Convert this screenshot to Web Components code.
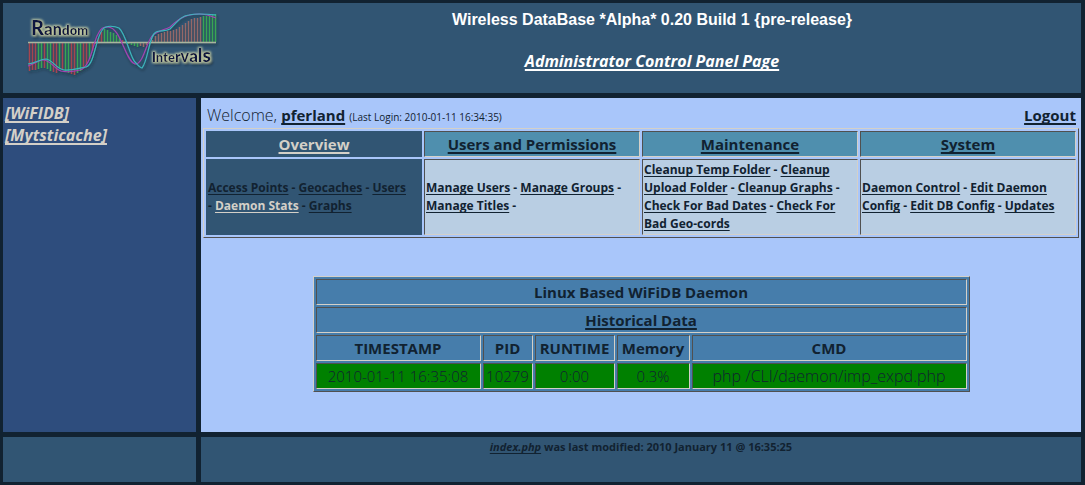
<!DOCTYPE html>
<html lang="en">
<head>
<meta charset="utf-8">
<title>Wireless DataBase - Administrator Control Panel</title>
<style>
  body { margin: 0; background: #112231; }
</style>
</head>
<body>
<wifi-app></wifi-app>

<template id="app-tpl">
  <style>
    :host {
      --ink: #112231; --panel: #315573; --light: #d4d0c8; --dark: #505050;
      display: grid; box-sizing: border-box; min-height: 100vh;
      grid-template-columns: 193px minmax(0, 1fr);
      grid-template-rows: auto 1fr auto;
      gap: 5px; padding: 3px 4px 3px 3px;
      background: var(--ink); color: var(--ink);
      font: 300 16px/22px "Open Sans", "Noto Sans", sans-serif;
      text-decoration-skip-ink: none;
    }
    site-header { grid-column: 1 / -1; }
    main { background: #a9c6fa; padding: 6px 2px 38px; }
    daemon-table { margin-top: 38px; }
    .foot { background: var(--panel); min-height: 45px; box-sizing: border-box; padding-top: 1px; }
    footer { text-align: center; font-weight: 700; font-size: 11px; line-height: 18px; }
    footer a { color: inherit; font-style: italic; text-decoration-thickness: 1px; text-underline-offset: 2px; }
  </style>
  <site-header></site-header>
  <side-nav>
    <a href="#wifidb">[WiFIDB]</a>
    <a href="#cache">[Mytsticache]</a>
  </side-nav>
  <main>
    <user-bar></user-bar>
    <admin-menu></admin-menu>
    <daemon-table></daemon-table>
  </main>
  <div class="foot"></div>
  <footer class="foot"><a href="index.php">index.php</a> was last modified: 2010 January 11 @ 16:35:25</footer>
</template>

<template id="header-tpl">
  <style>
    :host { display: flex; background: var(--panel); height: 90px; color: #fff; }
    site-logo { flex: none; margin: 4px 0 0 20px; }
    .titles { flex: 1; text-align: center; padding-top: 6px; }
    h1 { margin: 0; font: 700 16px/22px "Liberation Sans", Arial, sans-serif; }
    h2 { margin: 19px 0 0; font: italic 700 16px/22px "Open Sans", sans-serif; }
    a { color: inherit; text-decoration-thickness: 2px; text-underline-offset: 2px; }
  </style>
  <site-logo></site-logo>
  <div class="titles">
    <h1>Wireless DataBase *Alpha* 0.20 Build 1 {pre-release}</h1>
    <h2><a href="#panel">Administrator Control Panel Page</a></h2>
  </div>
</template>

<template id="logo-tpl">
  <style>
    :host { display: block; width: 200px; height: 80px; }
    svg { display: block; }
    text { font-family: Lato, "Open Sans", sans-serif; font-weight: 900; fill: #0b1340; }
  </style>
  <svg width="200" height="80" viewBox="23 7 200 80" role="img" aria-label="Random Intervals">
    <defs>
      <filter id="glow" x="-20%" y="-40%" width="140%" height="190%">
        <feGaussianBlur in="SourceAlpha" stdDeviation="1.4" result="s"/>
        <feOffset in="s" dx="2" dy="3" result="so"/>
        <feFlood flood-color="#0d1c28" flood-opacity=".8"/><feComposite in2="so" operator="in" result="shade"/>
        <feMorphology in="SourceAlpha" operator="dilate" radius="1" result="d"/>
        <feGaussianBlur in="d" stdDeviation="1" result="db"/>
        <feFlood flood-color="#d5dbad" flood-opacity=".85"/><feComposite in2="db" operator="in" result="halo"/>
        <feMerge><feMergeNode in="shade"/><feMergeNode in="halo"/><feMergeNode in="SourceGraphic"/></feMerge>
      </filter>
      <filter id="soft" x="-5%" y="-15%" width="110%" height="135%">
        <feDropShadow dx="1" dy="2" stdDeviation="1.5" flood-color="#101c24" flood-opacity=".5"/>
      </filter>
    </defs>
    <g filter="url(#soft)">
      <g id="bars"></g>
      <path d="M28 42.5H216" stroke="#a9b59d" stroke-width="1.4"/>
      <g fill="none" stroke-width="1.1">
        <path stroke="#a543b4" d="M28 66C35 64 38 60 43 60C51 60 54 69 61 71C69 73 74 71 80 70C91 67 93 42 98 34C101 28 103 27 108 27C121 27 125 61 135 64C143 65 146 43 152 36C158 30 165 30 170 27C180 17 188 14 199 14C207 14 211 16 216 18"/>
        <path stroke="#3cb8be" d="M28 64C36 63 40 59 46 59C53 60 56 69 64 70C72 71 79 68 86 67C95 64 95 38 103 29C106 25 115 26 119 28C126 34 130 57 135 62C138 65 140 68 142 68C148 62 149 35 156 32C160 30 165 32 170 29C178 21 181 16 189 15C197 13 206 14 216 15"/>
      </g>
    </g>
    <text filter="url(#glow)" x="31" y="35" font-size="20">R<tspan font-size="17">a</tspan><tspan font-size="16">n</tspan><tspan font-size="14">d</tspan><tspan font-size="13">o</tspan><tspan font-size="13">m</tspan></text>
    <text filter="url(#glow)" x="152" y="62" font-size="13">Int<tspan font-size="13">e</tspan><tspan font-size="15">r</tspan><tspan font-size="16">v</tspan><tspan font-size="17">a</tspan><tspan font-size="18">l</tspan><tspan font-size="19">s</tspan></text>
  </svg>
</template>

<template id="side-tpl">
  <style>
    :host { display: block; background: #2e4d7d; padding: 4px 2px; }
    ::slotted(a) { display: table; color: #d4d0c8; font: italic 700 16px/22px "Open Sans", sans-serif; text-decoration-thickness: 2px; text-underline-offset: 2px; }
  </style>
  <slot></slot>
</template>

<template id="user-tpl">
  <style>
    :host { display: flex; justify-content: space-between; padding: 0 3px 0 4px; }
    a { color: inherit; font-weight: 700; font-size: 15px; text-decoration-thickness: 2px; text-underline-offset: 2px; }
    small { font-size: 10px; font-weight: 400; }
  </style>
  <span>Welcome, <a href="#user">pferland</a> <small>(Last Login: 2010-01-11 16:34:35)</small></span>
  <a href="#logout">Logout</a>
</template>

<template id="menu-tpl">
  <style>
    :host { display: block; }
    table { width: 100%; table-layout: fixed; border: 1px solid; border-color: var(--light) var(--dark) var(--dark) var(--light); border-spacing: 2px; }
    th, td { padding: 1px; border: 1px solid; border-color: var(--dark) var(--light) var(--light) var(--dark); }
    th { background: #4f8fae; font: 700 15px/22px "Open Sans", sans-serif; }
    th a { text-decoration-thickness: 2px; text-underline-offset: 2px; }
    td { background: #b9cee3; font: 700 12px/18px "Open Sans", sans-serif; }
    td a { text-decoration-thickness: 1px; text-underline-offset: 2px; }
    a { color: inherit; }
    .keep { white-space: nowrap; }
    .on { background: var(--panel); border-color: var(--panel); }
    th.on, td.on .now { color: #d4d0c8; }
  </style>
  <table>
    <thead><tr>
      <th class="on"><a href="#overview">Overview</a></th>
      <th><a href="#users">Users and Permissions</a></th>
      <th><a href="#maint">Maintenance</a></th>
      <th><a href="#system">System</a></th>
    </tr></thead>
    <tbody><tr>
      <td class="on"><a href="#ap">Access Points</a> - <a href="#geo">Geocaches</a> - <a href="#u">Users</a> <span class="keep">- <a class="now" href="#stats">Daemon Stats</a></span> - <a href="#graphs">Graphs</a></td>
      <td><a href="#mu">Manage Users</a> - <a href="#mg">Manage Groups</a> - <a href="#mt">Manage Titles</a> -</td>
      <td><a href="#ct">Cleanup Temp Folder</a> - <a href="#cu">Cleanup Upload Folder</a> - <a href="#cg">Cleanup Graphs</a> - <a href="#bd">Check For Bad Dates</a> - <a href="#bg">Check For Bad Geo-cords</a></td>
      <td><a href="#dc">Daemon Control</a> - <a href="#ed">Edit Daemon Config</a> - <a href="#db">Edit DB Config</a> - <a href="#up">Updates</a></td>
    </tr></tbody>
  </table>
</template>

<template id="daemon-tpl">
  <style>
    :host { display: block; }
    table { width: 75%; max-width: 657px; margin: 0 auto; table-layout: fixed; background: #467dab; border: 1px solid; border-color: var(--light) var(--dark) var(--dark) var(--light); border-spacing: 2px; text-align: center; }
    th, td { padding: 1px; border: 1px solid; border-color: var(--dark) var(--light) var(--light) var(--dark); line-height: 22px; }
    th { font-weight: 700; font-size: 15px; }
    td { background: #008000; font-size: 16px; }
    td.num { font-size: 15px; }
    a { color: inherit; text-decoration-thickness: 2px; text-underline-offset: 2px; }
  </style>
  <table>
    <colgroup><col style="width:165px"><col style="width:50px"><col style="width:80px"><col style="width:73px"><col></colgroup>
    <thead>
      <tr><th colspan="5">Linux Based WiFiDB Daemon</th></tr>
      <tr><th colspan="5"><a href="#history">Historical Data</a></th></tr>
      <tr><th>TIMESTAMP</th><th>PID</th><th>RUNTIME</th><th>Memory</th><th>CMD</th></tr>
    </thead>
    <tbody>
      <tr><td class="num">2010-01-11 16:35:08</td><td class="num">10279</td><td class="num">0:00</td><td class="num">0.3%</td><td>php /CLI/daemon/imp_expd.php</td></tr>
    </tbody>
  </table>
</template>

<script>
  const register = (name, tpl, ready) => customElements.define(name, class extends HTMLElement {
    constructor() {
      super();
      this.attachShadow({ mode: 'open' }).append(document.getElementById(tpl).content.cloneNode(true));
      if (ready) ready(this.shadowRoot);
    }
  });

  // Histogram bars, 3 units apart, hanging from or rising above the zero line.
  const drawBars = root => {
    const ends = [71,70,70,69,68,68,69,71,72,73,68,70,72,73,74,75,73,71,68,64,59,51,44,38,32,
      29,30,32,33,35,38,40,41,44,45,46,47,46,47,45,44,40,36,34,33,32,31,31,30,29,27,25,23,21,19,18,18,17,16,16,16,15,14];
    const colors = 'rrrggrggrrgrggrrggrrgrrrrggggggrgggggrrrrrrrrrrrrrrrrrrrrrggggg';
    const g = root.getElementById('bars');
    ends.forEach((y, i) => {
      const p = document.createElementNS('http://www.w3.org/2000/svg', 'path');
      p.setAttribute('d', `M${29.5 + i * 3} 42V${y}`);
      p.setAttribute('stroke', colors[i] === 'g' ? '#38a653' : i > 36 ? '#956868' : '#a64450');
      p.setAttribute('stroke-width', '1.4');
      g.append(p);
    });
  };

  register('site-logo', 'logo-tpl', drawBars);
  register('site-header', 'header-tpl');
  register('side-nav', 'side-tpl');
  register('user-bar', 'user-tpl');
  register('admin-menu', 'menu-tpl');
  register('daemon-table', 'daemon-tpl');
  register('wifi-app', 'app-tpl');
</script>
</body>
</html>
